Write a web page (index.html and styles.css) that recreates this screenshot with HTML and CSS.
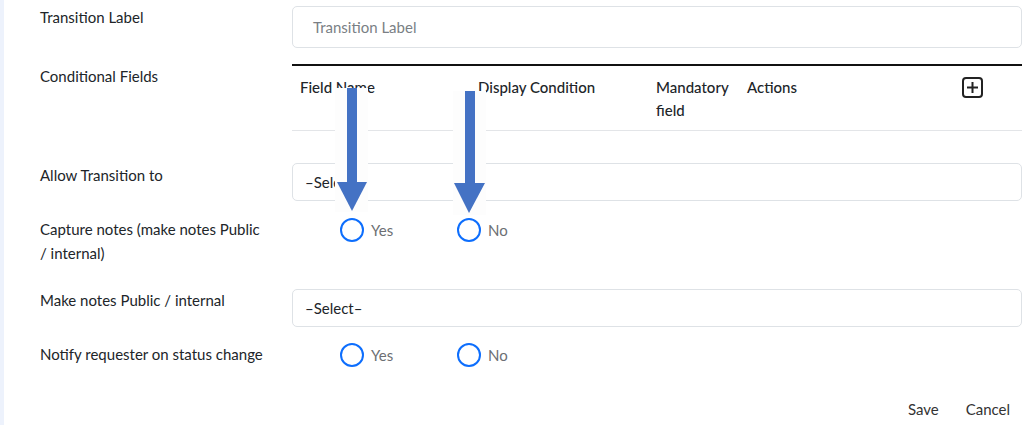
FILE: index.html
```html
<!DOCTYPE html>
<html>
<head>
<meta charset="utf-8">
<link rel="stylesheet" href="styles.css">
</head>
<body>
<div class="shell">
  <div class="stripe"></div>
  <div class="page">
    <div class="row row-1">
      <div class="label">Transition Label</div>
      <div class="control"><div class="input placeholder">Transition Label</div></div>
    </div>
    <div class="row row-2">
      <div class="label">Conditional Fields</div>
      <div class="control">
        <table class="cond">
          <thead>
            <tr>
              <th class="c1">Field Name</th>
              <th class="c2">Display Condition</th>
              <th class="c3">Mandatory field</th>
              <th class="c4">Actions</th>
              <th class="c5">
                <svg class="plus" width="21" height="21" viewBox="0 0 21 21"><rect x="1" y="1" width="19" height="19" rx="3" fill="none" stroke="#222" stroke-width="2"/><path d="M10.5 5v11M5 10.5h11" stroke="#222" stroke-width="2"/></svg>
              </th>
            </tr>
          </thead>
        </table>
      </div>
    </div>
    <div class="row row-3">
      <div class="label">Allow Transition to</div>
      <div class="control"><div class="input select">–Select–</div></div>
    </div>
    <div class="row row-4">
      <div class="label">Capture notes (make notes Public<br>/ internal)</div>
      <div class="control radios">
        <span class="opt"><span class="radio"></span><span class="opt-text">Yes</span></span>
        <span class="opt"><span class="radio"></span><span class="opt-text">No</span></span>
      </div>
    </div>
    <div class="row row-5">
      <div class="label">Make notes Public / internal</div>
      <div class="control"><div class="input select">–Select–</div></div>
    </div>
    <div class="row row-6">
      <div class="label">Notify requester on status change</div>
      <div class="control radios">
        <span class="opt"><span class="radio"></span><span class="opt-text">Yes</span></span>
        <span class="opt"><span class="radio"></span><span class="opt-text">No</span></span>
      </div>
    </div>
    <div class="footer">
      <span class="btn">Save</span>
      <span class="btn">Cancel</span>
    </div>
  </div>
  <svg class="arrows" width="1024" height="425" viewBox="0 0 1024 425">
    <rect x="335" y="88" width="33" height="124" fill="#fdfdfd"/>
    <rect x="347" y="88" width="10" height="95" fill="#4472c4"/>
    <polygon points="337,182 367,182 352,211" fill="#4472c4"/>
    <rect x="453" y="91" width="33" height="124" fill="#fdfdfd"/>
    <rect x="465" y="91" width="10" height="93" fill="#4472c4"/>
    <polygon points="454,183 485,183 469,213" fill="#4472c4"/>
  </svg>
</div>
</body>
</html>
```
FILE: styles.css
```css
* { box-sizing: border-box; }
html, body { margin: 0; padding: 0; background: #fff; }
body {
  font-family: Lato, "Liberation Sans", sans-serif;
  font-size: 15px;
  color: #212529;
  width: 1024px;
  height: 425px;
  overflow: hidden;
}
.shell { position: relative; display: flex; height: 425px; }
.stripe { width: 4px; background: #edf2fc; flex: none; }
.page { flex: 1; padding: 5px 2px 0 36px; }
.row { display: flex; }
.label { width: 252px; flex: none; line-height: 24px; }
.control { flex: 1; }
.input {
  border: 1px solid #dee2e6;
  border-radius: 5px;
  background: #fff;
}
.placeholder {
  margin-top: 1px;
  height: 42px;
  line-height: 40px;
  padding-left: 20px;
  color: #7a7f85;
}
.select {
  height: 38px;
  line-height: 36px;
  padding-left: 12px;
  color: #212529;
}
.row-2 { margin-top: 16px; }
.row-3 { margin-top: 32px; }
.row-4 { margin-top: 16px; }
.row-5 { margin-top: 23px; }
.row-6 { margin-top: 15px; }
.row-5 .control { margin-top: 1px; }
.cond {
  width: 100%;
  border-collapse: collapse;
  border-top: 2px solid #111;
}
.cond th {
  text-align: left;
  vertical-align: top;
  font-weight: 500;
  line-height: 23px;
  padding: 10px 8px 8px 8px;
  border-bottom: 1px solid #e3e5e8;
}
.cond .c1 { width: 178px; }
.cond .c2 { width: 178px; }
.cond .c3 { width: 91px; }
.cond .c4 { width: 215px; }
.cond .c5 { padding-top: 11px; }
.plus { display: block; }
.radios { display: flex; align-items: flex-start; padding-left: 48px; padding-top: 1px; }
.opt { display: flex; align-items: center; width: 117px; }
.radio {
  width: 24px; height: 24px;
  border: 2px solid #0d6efd;
  border-radius: 50%;
  flex: none;
}
.opt-text { margin-left: 7px; color: #6c6f73; line-height: 24px; }
.footer {
  display: flex;
  justify-content: flex-end;
  gap: 27px;
  padding-right: 12px;
  margin-top: 30px;
  line-height: 24px;
  color: #333;
}
.arrows { position: absolute; left: 0; top: 0; pointer-events: none; }
```
